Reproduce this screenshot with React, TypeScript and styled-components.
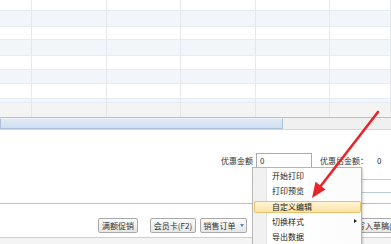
import React from "react";
import styled, { createGlobalStyle, css } from "styled-components";

const GlobalStyle = createGlobalStyle`
  html, body {
    margin: 0;
    padding: 0;
    background: #ffffff;
    overflow: hidden;
  }
  body {
    font-family: "Noto Sans CJK SC", "Liberation Sans", sans-serif;
    color: #333333;
  }
`;

const Page = styled.div`
  position: relative;
  width: 391px;
  height: 244px;
  overflow: hidden;
  background: #ffffff;
`;

/* ---------- data grid ---------- */

const cols = "32px 75px 74px 75px 74px 1fr";

const GridRow = styled.div<{ $h: number; $alt?: boolean }>`
  display: grid;
  grid-template-columns: ${cols};
  height: ${(p) => p.$h}px;
  box-sizing: border-box;
  background: ${(p) => (p.$alt ? "#f2f6fb" : "#ffffff")};
  border-bottom: 1px solid #e6ecf3;
`;

const Cell = styled.div`
  border-right: 1px solid #e4e9ef;
`;

const FooterRow = styled.div`
  display: grid;
  grid-template-columns: ${cols};
  height: 14px;
  background: #f4f4f4;
`;

const FooterCell = styled.div`
  border-right: 1px solid #e6e6e6;
`;

const ScrollBar = styled.div`
  display: flex;
  height: 13px;
  box-sizing: border-box;
  background: #f0f0f0;
  border-top: 1px solid #b8bfd2;
  border-bottom: 1px solid #d8d8d8;
`;

const ScrollThumb = styled.div`
  width: 283px;
  box-sizing: border-box;
  background: linear-gradient(#dfe9f5, #d0e0f1);
  border: 1px solid #adc0d9;
  border-top-color: #eef4fb;
  border-radius: 1px;
`;

/* ---------- form area ---------- */

const FormArea = styled.div`
  height: 73px;
  box-sizing: border-box;
  padding-top: 23px;
`;

const AmountRow = styled.div`
  display: flex;
  align-items: center;
  height: 15px;
  font-size: 8px;
`;

const Label = styled.span<{ $w?: number; $ml?: number }>`
  ${(p) => p.$w && `width: ${p.$w}px;`}
  margin-left: ${(p) => p.$ml ?? 0}px;
  text-align: right;
  white-space: nowrap;
`;

const Input = styled.div`
  width: 56px;
  height: 15px;
  margin-left: 3px;
  box-sizing: border-box;
  border: 1px solid #a5acb5;
  padding-left: 3px;
  line-height: 13px;
  background: #ffffff;
`;

const Value = styled.span`
  margin-left: 9px;
`;

const LinedBox = styled.div`
  margin: 11px 0 0 320px;
  height: 14px;
  box-sizing: border-box;
  border-top: 1px solid #b9ccd8;
  border-bottom: 1px solid #b9ccd8;
`;

/* ---------- toolbar ---------- */

const Toolbar = styled.div`
  display: flex;
  align-items: flex-start;
  height: 35px;
  box-sizing: border-box;
  padding: 14px 0 0 98px;
  border-top: 1px solid #a9c3cf;
  border-bottom: 1px solid #cfcfcf;
`;

const Button = styled.div<{ $ml?: number; $w: number }>`
  display: flex;
  align-items: center;
  justify-content: center;
  gap: 4px;
  flex: none;
  width: ${(p) => p.$w}px;
  height: 15px;
  margin-left: ${(p) => p.$ml ?? 0}px;
  box-sizing: border-box;
  border: 1px solid #a9a9a9;
  border-radius: 2px;
  background: linear-gradient(#fbfbfb, #e6e6e6);
  font-size: 8px;
  white-space: nowrap;
  overflow: hidden;
`;

const WideButton = styled(Button)`
  justify-content: flex-start;
  padding-left: 5px;
`;

const Caret = styled.span`
  width: 0;
  height: 0;
  border-left: 2.5px solid transparent;
  border-right: 2.5px solid transparent;
  border-top: 3px solid #5b84b6;
`;

const BottomStrip = styled.div`
  height: 6px;
  background: #f4f4f4;
`;

/* ---------- context menu ---------- */

const Menu = styled.div`
  position: absolute;
  left: 252px;
  top: 167px;
  width: 110px;
  height: 100px;
  box-sizing: border-box;
  border: 1px solid #b6b6b6;
  background: linear-gradient(to right, #f1f1f1 0, #f1f1f1 13px, #e2e3e3 13px, #e2e3e3 14px, #ffffff 14px, #fcfcfc 100%);
  box-shadow: 1px 1px 2px rgba(0, 0, 0, 0.2);
  font-size: 8px;
  color: #222222;
`;

const MenuItem = styled.div<{ $active?: boolean }>`
  position: relative;
  display: flex;
  align-items: center;
  height: 15.3px;
  padding-left: 19px;
  box-sizing: border-box;
  ${(p) =>
    p.$active &&
    css`
      &::before {
        content: "";
        position: absolute;
        left: 1px;
        right: 0;
        top: 2px;
        bottom: 1px;
        border: 1px solid #e6c26a;
        border-radius: 2px;
        background: linear-gradient(#fff4d4, #fbe2a4);
      }
    `}
`;

const ItemText = styled.span`
  position: relative;
`;

const SubArrow = styled.span`
  position: absolute;
  right: 4px;
  top: 5px;
  width: 0;
  height: 0;
  border-top: 2.5px solid transparent;
  border-bottom: 2.5px solid transparent;
  border-left: 3px solid #222222;
`;

const ArrowSvg = styled.svg`
  position: absolute;
  left: 0;
  top: 0;
  pointer-events: none;
`;

const gridRows: [number, boolean][] = [
  [11, false],
  [16, true],
  [13, false],
  [16, true],
  [14, false],
  [14, true],
  [15, false],
  [4, true],
];

const menuItems = ["开始打印", "打印预览", "自定义编辑", "切换样式", "导出数据"];

export default function App() {
  return (
    <>
      <GlobalStyle />
      <Page>
        {gridRows.map(([h, alt], i) => (
          <GridRow key={i} $h={h} $alt={alt}>
            {Array.from({ length: 6 }).map((_, j) => (
              <Cell key={j} />
            ))}
          </GridRow>
        ))}
        <FooterRow>
          {Array.from({ length: 6 }).map((_, j) => (
            <FooterCell key={j} />
          ))}
        </FooterRow>
        <ScrollBar>
          <ScrollThumb />
        </ScrollBar>

        <FormArea>
          <AmountRow>
            <Label $w={253}>优惠金额</Label>
            <Input>0</Input>
            <Label $ml={8}>优惠后金额：</Label>
            <Value>0</Value>
          </AmountRow>
          <LinedBox />
        </FormArea>

        <Toolbar>
          <Button $w={40}>满额促销</Button>
          <Button $w={46} $ml={12}>会员卡(F2)</Button>
          <Button $w={47} $ml={4}>
            销售订单 <Caret />
          </Button>
          <WideButton $w={60} $ml={104}>写入草稿(F4)</WideButton>
        </Toolbar>
        <BottomStrip />

        <Menu>
          {menuItems.map((t, i) => (
            <MenuItem key={t} $active={i === 2}>
              <ItemText>{t}</ItemText>
              {i === 3 && <SubArrow />}
            </MenuItem>
          ))}
        </Menu>

        <ArrowSvg width="391" height="244" viewBox="0 0 391 244">
          <line x1="378" y1="112" x2="320" y2="187" stroke="#e5262b" strokeWidth="2.6" strokeLinecap="round" />
          <polygon points="312,198 325.5,189.5 315.5,181.8" fill="#e5262b" />
        </ArrowSvg>
      </Page>
    </>
  );
}
